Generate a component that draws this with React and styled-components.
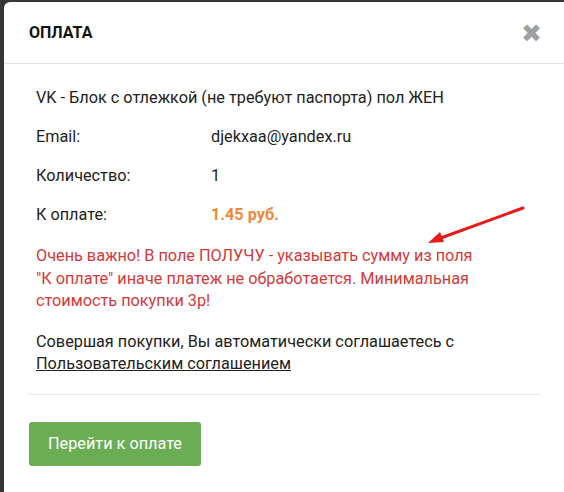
import React from 'react';
import styled, {createGlobalStyle} from 'styled-components';

const Global = createGlobalStyle`
    html, body { margin:0; padding:0; }
    body {
        background:#363636;
        font-family:Roboto, "Liberation Sans", sans-serif;
        overflow:hidden;
    }
`;

const Page = styled.div`
    width:564px;
    height:492px;
    overflow:hidden;
    padding:2px 0 0 4px;
    box-sizing:border-box;
`;

const Modal = styled.div`
    position:relative;
    width:600px;
    min-height:520px;
    background:#fff;
    border-radius:6px;
`;

const Header = styled.div`
    display:flex;
    align-items:center;
    justify-content:space-between;
    height:61px;
    padding:0 0 0 25px;
    border-bottom:1px solid #e5e5e5;
`;

const Title = styled.h4`
    margin:0;
    font-size:16px;
    font-weight:700;
    color:#111;
`;

const Close = styled.span`
    margin-right:62px;
    margin-top:1px;
    color:#a0a0a0;
    font-size:25px;
    font-weight:700;
    line-height:1;
    font-family:"DejaVu Sans", sans-serif;
`;

const Body = styled.div`
    padding:23px 32px 0;
    width:446px;
    color:#222;
    font-size:16.25px;
    line-height:22px;
`;

const Line = styled.div`
    display:flex;
    margin-bottom:${p => p.last ? 0 : 17}px;
`;

const Label = styled.div`
    width:175px;
    flex:none;
`;

const Value = styled.div`
    color:${p => p.accent ? '#f0883a' : '#222'};
    font-weight:${p => p.accent ? 700 : 400};
`;

const Warning = styled.p`
    margin:19px 0 0;
    color:#d23a3a;
    line-height:22.5px;
`;

const Agreement = styled.p`
    margin:18px 0 0;
    a { color:#222; text-decoration:underline; }
`;

const Footer = styled.div`
    width:512px;
    margin:19px 0 0 25px;
    padding-top:27px;
    border-top:1px solid #e8e8e8;
`;

const PayButton = styled.button`
    width:172px;
    height:44px;
    border:none;
    border-radius:3px;
    background:#6aad55;
    color:#fff;
    font-family:inherit;
    font-size:16.25px;
`;

const Arrow = styled.svg`
    position:absolute;
    left:0;
    top:0;
    pointer-events:none;
`;

export default function App(){
    return(
        <Page>
            <Global/>
            <Modal>
                <Header>
                    <Title>ОПЛАТА</Title>
                    <Close>✖</Close>
                </Header>
                <Body>
                    <Line>VK - Блок с отлежкой (не требуют паспорта) пол ЖЕН</Line>
                    <Line><Label>Email:</Label><Value>djekxaa@yandex.ru</Value></Line>
                    <Line><Label>Количество:</Label><Value>1</Value></Line>
                    <Line last><Label>К оплате:</Label><Value accent>1.45 руб.</Value></Line>
                    <Warning>
                        Очень важно! В поле ПОЛУЧУ - указывать сумму из поля "К оплате" иначе платеж не обработается. Минимальная стоимость покупки 3р!
                    </Warning>
                    <Agreement>
                        Совершая покупки, Вы автоматически соглашаетесь с <a href="#">Пользовательским соглашением</a>
                    </Agreement>
                </Body>
                <Footer>
                    <PayButton>Перейти к оплате</PayButton>
                </Footer>
                <Arrow width="600" height="300">
                    <line x1="519" y1="206" x2="434" y2="237" stroke="#e8191b" strokeWidth="3" strokeLinecap="round"/>
                    <polygon points="424,241 436,230 440,240" fill="#e8191b"/>
                </Arrow>
            </Modal>
        </Page>
    )
}
